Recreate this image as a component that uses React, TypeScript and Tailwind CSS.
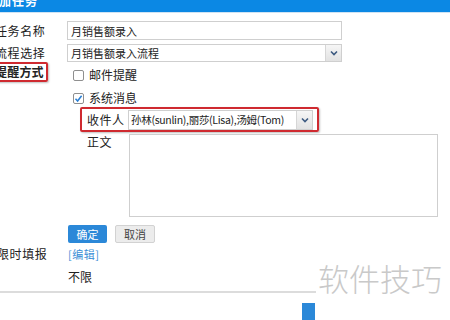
const cjk = { fontFamily: '"Microsoft YaHei", "Noto Sans CJK SC", "Noto Sans", sans-serif' }

function Chevron() {
  return (
    <svg width="8" height="6" viewBox="0 0 8 6">
      <path d="M1 1.5 L4 4.5 L7 1.5" fill="none" stroke="#3d5a80" strokeWidth="1.6" />
    </svg>
  )
}

function DropBtn() {
  return (
    <div className="flex w-[16px] shrink-0 items-center justify-center border-l border-[#d6d6d6] bg-gradient-to-b from-[#f6f6f6] to-[#e2e2e2]">
      <Chevron />
    </div>
  )
}

function Checkbox({ checked }: { checked?: boolean }) {
  return (
    <div className="flex h-[11px] w-[11px] items-center justify-center rounded-[2px] border border-[#8f8f8f] bg-white">
      {checked && (
        <svg width="9" height="9" viewBox="0 0 9 9">
          <path d="M1.5 4.8 L3.6 7 L7.6 1.8" fill="none" stroke="#2a7fd4" strokeWidth="1.5" />
        </svg>
      )}
    </div>
  )
}

export default function App() {
  return (
    <div className="relative h-[320px] w-[450px] overflow-hidden bg-white leading-[14px] text-[#222]" style={cjk}>
      <div className="h-[13px] overflow-hidden border-b border-[#cfe3f3] bg-[#0b88e4]">
        <div className="-ml-[14px] -mt-[7px] whitespace-nowrap text-[12px] font-bold leading-[16px] tracking-[1px] text-white">添加任务</div>
      </div>

      <div className="mt-[8px] flex h-[19px] items-center">
        <div className="-ml-[5px] w-[72px] shrink-0 whitespace-nowrap text-[12px] tracking-[0.6px]">任务名称</div>
        <div className="flex h-[19px] w-[275px] items-center border border-[#cfcfcf] pl-[3px] text-[11px]">月销售额录入</div>
      </div>

      <div className="mt-[4px] flex h-[18px] items-center">
        <div className="-ml-[5px] w-[72px] shrink-0 whitespace-nowrap text-[12px] tracking-[0.6px]">流程选择</div>
        <div className="flex h-[18px] w-[275px] border border-[#cfcfcf] text-[11px]">
          <div className="flex flex-1 items-center pl-[3px]">月销售额录入流程</div>
          <DropBtn />
        </div>
      </div>

      <div className="flex">
        <div className="w-[67px] shrink-0">
          <div className="-ml-[7px] flex h-[20px] w-[55px] items-center whitespace-nowrap rounded-[2px] border-2 border-[#cf2a30] text-[12px] font-bold tracking-[0.2px] shadow-[1px_1px_2px_rgba(0,0,0,0.25)]">
            提醒方式
          </div>
        </div>
        <div className="flex flex-col">
          <div className="mt-[6px] flex h-[14px] items-center gap-[5px] pl-[6px] text-[12px]">
            <Checkbox />
            <span>邮件提醒</span>
          </div>
          <div className="mt-[9px] flex h-[14px] items-center gap-[5px] pl-[6px] text-[12px]">
            <Checkbox checked />
            <span>系统消息</span>
          </div>
          <div className="ml-[13px] mt-[2px] flex h-[25px] w-[239px] items-center rounded-[2px] border-2 border-[#cf2a30] pl-[5px] shadow-[1px_1px_2px_rgba(0,0,0,0.25)]">
            <div className="w-[41px] shrink-0 whitespace-nowrap text-[12px] tracking-[0.5px]">收件人</div>
            <div className="flex h-[20px] w-[185px] border border-[#cfcfcf] bg-white text-[10.5px] tracking-[-0.3px]">
              <div className="flex flex-1 items-center overflow-hidden whitespace-nowrap pl-[2px]">孙林(sunlin),丽莎(Lisa),汤姆(Tom)</div>
              <DropBtn />
            </div>
          </div>
          <div className="ml-[20px] mt-[2px] flex">
            <div className="w-[42px] shrink-0 pt-[1px] text-[12px] tracking-[0.5px]">正文</div>
            <div className="h-[83px] w-[309px] border border-[#cfcfcf]" />
          </div>
          <div className="ml-[1px] mt-[8px] flex gap-[8px] text-[11px]">
            <button className="h-[18px] w-[39px] rounded-[2px] bg-[#2b88d8] leading-[14px] text-white">确定</button>
            <button className="h-[18px] w-[40px] rounded-[2px] border border-[#d2d2d2] bg-[#ececec] leading-[14px] text-[#444]">取消</button>
          </div>
        </div>
      </div>

      <div className="mt-[4px] flex h-[14px] items-center">
        <div className="-ml-[3px] w-[71px] shrink-0 whitespace-nowrap text-[12px] tracking-[0.6px]">限时填报</div>
        <div className="text-[11px] tracking-[0.5px] text-[#3b8fd6]">[编辑]</div>
      </div>
      <div className="mt-[9px] h-[14px] pl-[68px] text-[12px]">不限</div>

      <div className="mt-[7px] h-[2px] w-[316px] bg-[#dcdcdc]" />
      <div className="ml-[302px] mt-[10px] h-[20px] w-[13px] bg-[#2b88d8]" />

      <div className="absolute left-[316px] top-[258px] bg-white px-[2px] text-[31px] font-light leading-[40px] text-[#c9c9c9]">软件技巧</div>
    </div>
  )
}
